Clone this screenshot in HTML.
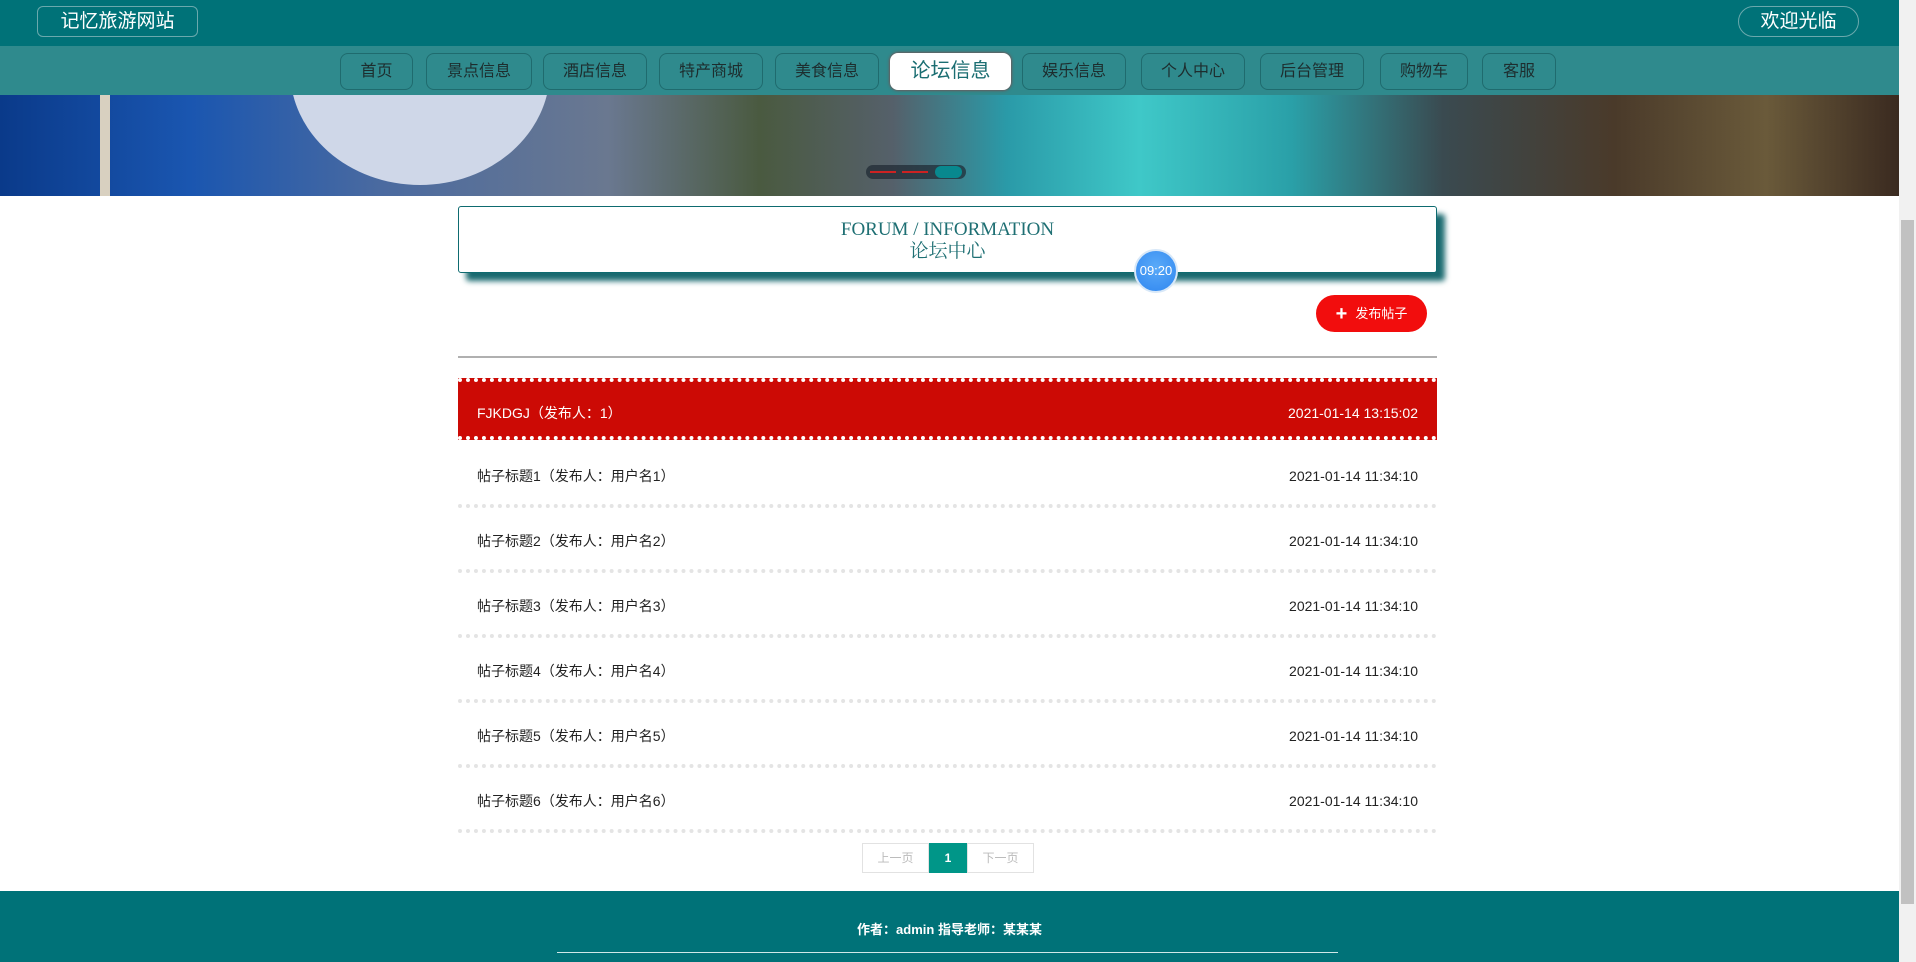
<!DOCTYPE html>
<html><head><meta charset="utf-8"><style>
*{margin:0;padding:0;box-sizing:border-box}
body{width:1916px;height:962px;overflow:hidden;background:#fff;font-family:"Liberation Sans","Noto Sans CJK SC",sans-serif;position:relative}
.hdr{position:absolute;left:0;top:0;width:1899px;height:46px;background:#007278}
.logo{position:absolute;left:37px;top:6px;width:161px;height:31px;border:1px solid #6aa9ad;border-radius:6px;color:#fff;font-size:19px;text-align:center;line-height:29px}
.wel{position:absolute;left:1738px;top:6px;width:121px;height:31px;border:1px solid #6aa9ad;border-radius:16px;color:#fff;font-size:19px;text-align:center;line-height:29px}
.nav{position:absolute;left:0;top:46px;width:1899px;height:50px;background:#2f8a8d}
.nb{position:absolute;top:7px;height:37px;border:1px solid #1f6b6e;border-radius:8px;background:#2f8a8d;color:#1d2d2e;font-size:16px;text-align:center;line-height:35px}
.nb.act{background:#fff;color:#1b6e72;font-size:20px;border-color:#fff;box-shadow:0 0 3px #933}
.ban{position:absolute;left:0;top:95px;width:1899px;height:101px;overflow:hidden;background:linear-gradient(90deg,#0a3a8a 0%,#1a56b0 10%,#4a6aa0 20%,#6a7890 32%,#4a5a40 40%,#55606a 47%,#2a9aa8 53%,#3fc8c8 60%,#2aa0a8 68%,#3a4a50 76%,#4a3a2a 85%,#6a5a3a 93%,#3a2a20 100%)}
.circ{position:absolute;left:290px;top:-140px;width:260px;height:230px;border-radius:50%;background:#cfd7e8}
.sb{position:absolute;left:1899px;top:0;width:17px;height:962px;background:#f1f1f1}
.sbt{position:absolute;left:1901px;top:220px;width:13px;height:684px;background:#c1c1c1}
.tbox{position:absolute;left:458px;top:206px;width:979px;height:67px;border:1px solid #0e6b70;border-radius:3px;background:#fff;box-shadow:8px 8px 6px #1a6a70;text-align:center;color:#1e6f73;font-family:"Liberation Serif","Noto Serif CJK SC",serif}
.clk{position:absolute;left:1134px;top:249px;width:44px;height:44px;border-radius:50%;background:radial-gradient(circle at 50% 40%,#5aaaf8,#2f86f0);border:2px solid #d8e8f8;color:#fff;font-size:13px;text-align:center;line-height:40px}
.pub{position:absolute;left:1316px;top:295px;width:111px;height:37px;border-radius:19px;background:#f20d0d;color:#fff;font-size:13px;line-height:37px;text-align:center}
.hr{position:absolute;left:458px;top:356px;width:979px;height:2px;background:#b0b0b0}
.row{position:absolute;left:458px;width:979px;height:65px;font-size:14px;color:#222;border-bottom:4px dotted #e4e4e4}
.row span{position:absolute;top:24px;line-height:18px;height:18px}
.row .l{left:19px}.row .r{right:19px}
.red{background:#cc0a05;color:#fff;border-top:4px dotted #fff;border-bottom:4px dotted #fff;height:62px;top:378px}
.red span{top:22px}
.pg{position:absolute;top:843px;height:30px;border:1px solid #e2e2e2;font-size:12px;color:#bbb;text-align:center;line-height:28px}
.ft{position:absolute;left:0;top:891px;width:1899px;height:71px;background:#007278;color:#fff;font-size:13px;font-weight:bold;text-align:center}
</style></head><body>
<div class="hdr"><div class="logo">记忆旅游网站</div><div class="wel">欢迎光临</div></div>
<div class="nav">
<div class="nb" style="left:340px;width:73px">首页</div>
<div class="nb" style="left:426px;width:106px">景点信息</div>
<div class="nb" style="left:543px;width:104px">酒店信息</div>
<div class="nb" style="left:659px;width:104px">特产商城</div>
<div class="nb" style="left:775px;width:104px">美食信息</div>
<div class="nb act" style="left:890px;width:121px">论坛信息</div>
<div class="nb" style="left:1022px;width:104px">娱乐信息</div>
<div class="nb" style="left:1141px;width:104px">个人中心</div>
<div class="nb" style="left:1260px;width:104px">后台管理</div>
<div class="nb" style="left:1380px;width:88px">购物车</div>
<div class="nb" style="left:1482px;width:74px">客服</div>
</div>
<div class="ban"><div class="circ"></div>
<div style="position:absolute;left:100px;top:0;width:10px;height:101px;background:#d8d0c0"></div>
<div style="position:absolute;left:866px;top:70px;width:100px;height:14px;border-radius:7px;background:rgba(30,40,50,.7)"></div>
<div style="position:absolute;left:870px;top:76px;width:26px;height:2px;background:#c22"></div>
<div style="position:absolute;left:902px;top:76px;width:26px;height:2px;background:#c22"></div>
<div style="position:absolute;left:935px;top:71px;width:27px;height:12px;border-radius:6px;background:#08888e"></div>
</div>
<div class="sb"></div><div class="sbt"></div>
<div class="tbox"><div style="font-size:19px;margin-top:12px">FORUM / INFORMATION</div><div style="font-size:19px;line-height:22px">论坛中心</div></div>
<div class="clk">09:20</div>
<div class="pub"><b style="font-size:20px;vertical-align:-2px;margin-right:8px">+</b>发布帖子</div>
<div class="hr"></div>
<div class="row red"><span class="l">FJKDGJ（发布人：1）</span><span class="r">2021-01-14 13:15:02</span></div>
<div class="row" style="top:443px"><span class="l">帖子标题1（发布人：用户名1）</span><span class="r">2021-01-14 11:34:10</span></div>
<div class="row" style="top:508px"><span class="l">帖子标题2（发布人：用户名2）</span><span class="r">2021-01-14 11:34:10</span></div>
<div class="row" style="top:573px"><span class="l">帖子标题3（发布人：用户名3）</span><span class="r">2021-01-14 11:34:10</span></div>
<div class="row" style="top:638px"><span class="l">帖子标题4（发布人：用户名4）</span><span class="r">2021-01-14 11:34:10</span></div>
<div class="row" style="top:703px"><span class="l">帖子标题5（发布人：用户名5）</span><span class="r">2021-01-14 11:34:10</span></div>
<div class="row" style="top:768px"><span class="l">帖子标题6（发布人：用户名6）</span><span class="r">2021-01-14 11:34:10</span></div>
<div class="pg" style="left:862px;width:67px">上一页</div>
<div class="pg" style="left:929px;width:38px;background:#009688;border-color:#009688;color:#fff;font-weight:bold">1</div>
<div class="pg" style="left:967px;width:67px">下一页</div>
<div class="ft"><div style="margin-top:28px">作者：admin 指导老师：某某某</div><div style="position:absolute;left:557px;top:61px;width:781px;height:1px;background:#d0e8e8"></div></div>
</body></html>
